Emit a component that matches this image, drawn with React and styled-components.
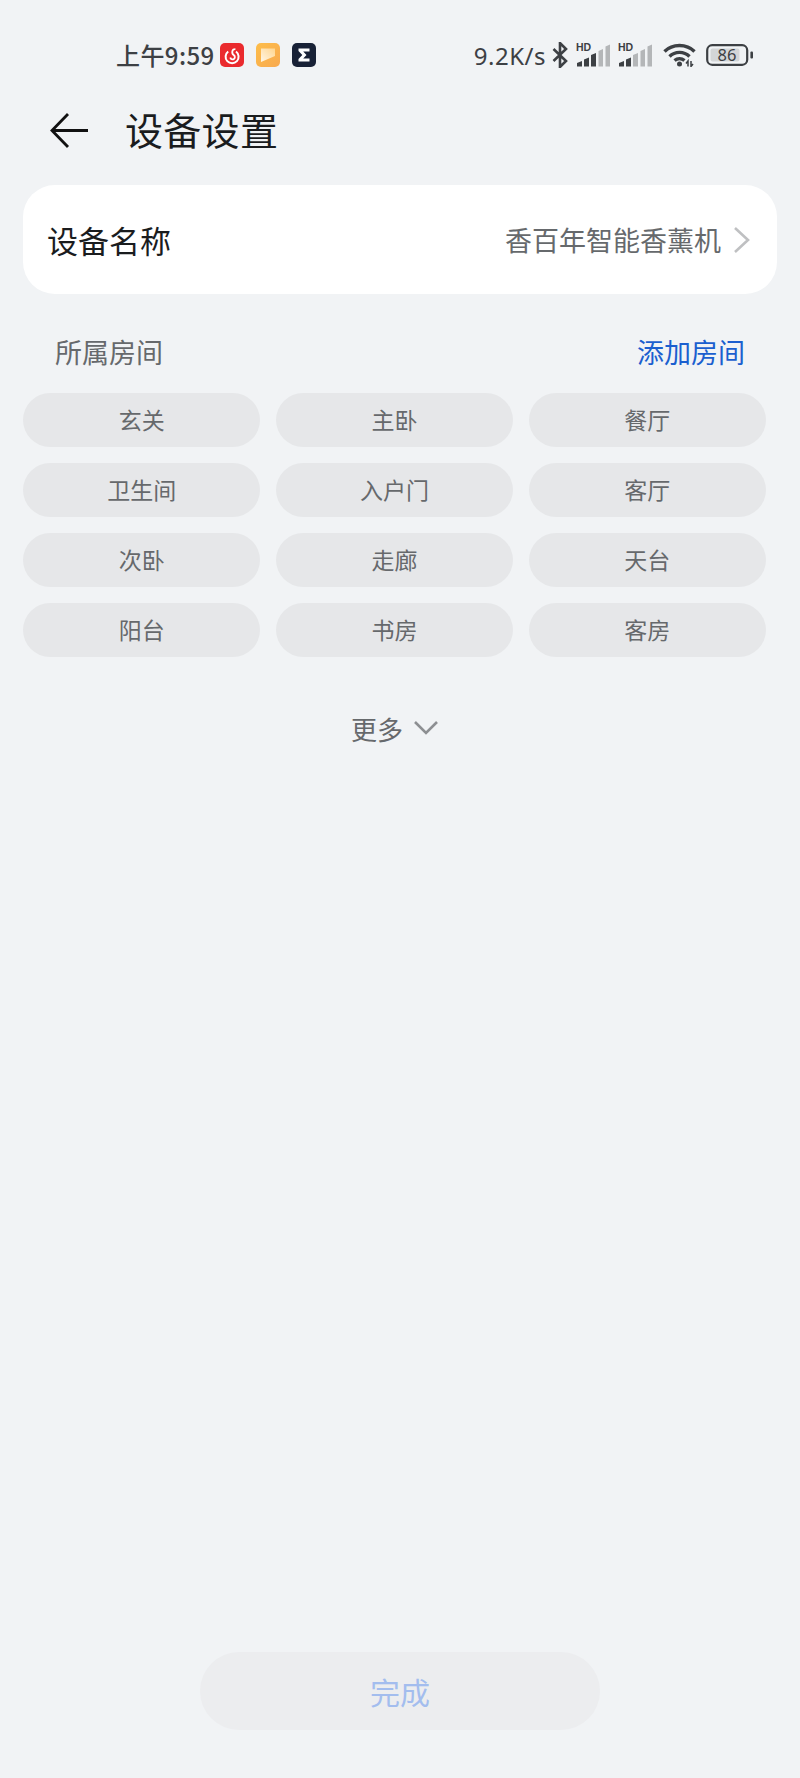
import React from 'react';
import styled, { createGlobalStyle } from 'styled-components';

const GlobalStyle = createGlobalStyle`
  html, body {
    margin: 0;
    padding: 0;
    background: #f1f3f5;
  }
  * {
    box-sizing: border-box;
  }
`;

const Page = styled.div`
  display: flex;
  flex-direction: column;
  width: 800px;
  height: 1778px;
  background: #f1f3f5;
  font-family: 'Noto Sans CJK SC', 'Noto Sans', sans-serif;
  overflow: hidden;
`;

const StatusBar = styled.div`
  display: flex;
  justify-content: space-between;
  align-items: center;
  height: 40px;
  margin-top: 35px;
  padding: 0 47px 0 116px;
  color: #3d4044;
`;

const StatusGroup = styled.div`
  display: flex;
  align-items: center;
`;

const Clock = styled.span`
  font-size: 24px;
  font-weight: 500;
  letter-spacing: 0.4px;
  margin: 0 6px 2px 0;
`;

const AppIcon = styled.svg`
  width: 24px;
  height: 24px;
  margin-right: 12px;
  &:first-of-type {
    margin-left: -1px;
  }
`;

const Speed = styled.span`
  font-family: 'Noto Sans', sans-serif;
  font-size: 24px;
  margin-right: 6px;
  letter-spacing: 0.5px;
`;

const BluetoothIcon = styled.svg`
  width: 16px;
  height: 26px;
  margin-right: 8px;
`;

const SignalSvg = styled.svg`
  width: 35px;
  height: 32px;
  margin: -8px 7px 0 0;
`;

const WifiIcon = styled.svg`
  width: 33px;
  height: 24px;
  margin: 0 10px 0 3px;
`;

const BatteryIcon = styled.svg`
  width: 47px;
  height: 22px;
`;

const Header = styled.div`
  display: flex;
  align-items: center;
  height: 64px;
  margin-top: 21px;
  padding-left: 49px;
`;

const BackIcon = styled.svg`
  width: 40px;
  height: 37px;
  margin: 5px 36px 0 0;
`;

const Title = styled.h1`
  margin: 0;
  font-size: 38px;
  font-weight: 400;
  color: #1a1c1e;
  letter-spacing: 0.3px;
`;

const NameCard = styled.div`
  display: flex;
  justify-content: space-between;
  align-items: center;
  width: 754px;
  height: 109px;
  margin: 25px 0 0 23px;
  padding: 0 27px 0 24px;
  background: #fff;
  border-radius: 32px;
`;

const NameLabel = styled.span`
  font-size: 31px;
  color: #1a1c1e;
`;

const NameValue = styled.div`
  display: flex;
  align-items: center;
  gap: 12px;
  font-size: 27px;
  color: #66696c;
`;

const Chevron = styled.svg`
  width: 17px;
  height: 28px;
`;

const SectionHead = styled.div`
  display: flex;
  justify-content: space-between;
  align-items: center;
  height: 40px;
  margin-top: 37px;
  padding: 0 55px 0 55px;
  font-size: 27px;
`;

const SectionTitle = styled.span`
  color: #66696c;
`;

const AddLink = styled.a`
  color: #1b5fcf;
`;

const RoomGrid = styled.div`
  display: grid;
  grid-template-columns: repeat(3, 1fr);
  grid-auto-rows: 54px;
  column-gap: 15.5px;
  row-gap: 16px;
  width: 743px;
  margin: 22px 0 0 23px;
`;

const RoomChip = styled.div`
  display: flex;
  justify-content: center;
  align-items: center;
  padding-bottom: 2px;
  background: #e6e7e9;
  border-radius: 27px;
  font-size: 23px;
  color: #66696c;
`;

const MoreRow = styled.div`
  display: flex;
  justify-content: center;
  align-items: center;
  gap: 10px;
  height: 40px;
  margin-top: 51px;
  padding-right: 10px;
  font-size: 26px;
  color: #66696c;
`;

const MoreIcon = styled.svg`
  width: 26px;
  height: 16px;
`;

const Footer = styled.div`
  display: flex;
  justify-content: center;
  margin-top: auto;
  padding-bottom: 48px;
`;

const DoneButton = styled.button`
  width: 400px;
  height: 78px;
  border: 0;
  border-radius: 39px;
  background: #ecedef;
  color: #a3bdee;
  font-family: inherit;
  font-size: 30px;
  font-weight: 400;
`;

const rooms = ['玄关', '主卧', '餐厅', '卫生间', '入户门', '客厅', '次卧', '走廊', '天台', '阳台', '书房', '客房'];

// five bars with slanted tops, the first ones dark
const bars = [
  { x: 1, w: 5, top: 18 },
  { x: 8, w: 5, top: 14.5 },
  { x: 15, w: 5, top: 10 },
  { x: 22.5, w: 4.5, top: 6 },
  { x: 29.5, w: 4.5, top: 1.5 },
];

const SignalIcon = ({ filled }) => (
  <SignalSvg viewBox="0 -8 35 32">
    <text x="0" y="7.500" fontSize="10.500" fontWeight="700" fontFamily="'Liberation Sans', sans-serif" fill="#3d4044">HD</text>
    {bars.map((b, i) => (
      <path
        key={b.x}
        d={`M${b.x} 23.500V${b.top + 2}L${b.x + b.w} ${b.top}V23.500z`}
        fill={i < filled ? '#3d4044' : '#b4b6b8'}
      />
    ))}
  </SignalSvg>
);

const App = () => {
  return (
    <Page>
      <GlobalStyle />
      <StatusBar>
        <StatusGroup>
          <Clock>上午9:59</Clock>
          <AppIcon viewBox="0 0 24 24">
            <rect width="24" height="24" rx="5" fill="#ea2a2e" />
            <path d="M8.200 8.500a6.500 6.500 0 1 0 7.800 0" fill="none" stroke="#fff" strokeWidth="2" />
            <path d="M10.300 14.500a2.300 2.300 0 1 0 3.400-2.400c-1.200-.9-1.700-2.500-1.300-4.200.3-1.100 1.400-1.800 3-1.800" fill="none" stroke="#fff" strokeWidth="1.800" />
          </AppIcon>
          <AppIcon viewBox="0 0 24 24">
            <defs>
              <linearGradient id="noteBg" x1="0" y1="0" x2="1" y2="1">
                <stop offset="0" stopColor="#fdbd4a" />
                <stop offset="1" stopColor="#f8a94f" />
              </linearGradient>
              <linearGradient id="noteFg" x1="0" y1="1" x2="1" y2="0">
                <stop offset="0" stopColor="#fff6e6" />
                <stop offset="1" stopColor="#ffd58e" />
              </linearGradient>
            </defs>
            <rect width="24" height="24" rx="5" fill="url(#noteBg)" />
            <path d="M5 5.500h14v7.500L5 19z" fill="url(#noteFg)" />
          </AppIcon>
          <AppIcon viewBox="0 0 24 24">
            <rect width="24" height="24" rx="5" fill="#182136" />
            <path d="M6.500 5.500h11v3h-6.300l3.300 3.500-3.300 3.500h6.300v3h-11v-2.600l3.800-3.900-3.800-3.900z" fill="#fff" />
          </AppIcon>
        </StatusGroup>
        <StatusGroup>
          <Speed>9.2K/s</Speed>
          <BluetoothIcon viewBox="0 0 16 26">
            <path d="M1.500 7l12.500 12-6 6V1l6 6L1.500 19" fill="none" stroke="#3d4044" strokeWidth="2.600" />
          </BluetoothIcon>
          <SignalIcon filled={3} />
          <SignalIcon filled={2} />
          <WifiIcon viewBox="0 0 33 24">
            <path d="M1.500 8.500c8-8 22-8 30 0M6.500 13.500c5.500-5.500 14.500-5.500 20 0M11.500 17.500c3-2.500 7-2.500 10 0" fill="none" stroke="#3d4044" strokeWidth="3.400" />
            <circle cx="16.500" cy="21" r="2.500" fill="#3d4044" />
            <path d="M25 23.500v-5.500l-2 2.500M28 18v5.500l2-2.500" fill="none" stroke="#3d4044" strokeWidth="1.500" />
          </WifiIcon>
          <BatteryIcon viewBox="0 0 47 22">
            <rect x="1.200" y="1.200" width="40" height="19.600" rx="5" fill="none" stroke="#3d4044" strokeWidth="2.200" />
            <rect x="4.500" y="4.500" width="29" height="13" rx="2" fill="#d3d5d7" />
            <rect x="44.400" y="7.500" width="2.600" height="7" rx="1" fill="#3d4044" />
            <text x="21" y="16.800" textAnchor="middle" fontSize="16.500" fontFamily="'Noto Sans', sans-serif" fill="#3d4044">86</text>
          </BatteryIcon>
        </StatusGroup>
      </StatusBar>

      <Header>
        <BackIcon viewBox="0 0 40 37">
          <path d="M19 2L3 18.500 19 35M3 18.500h36" fill="none" stroke="#111" strokeWidth="2.800" />
        </BackIcon>
        <Title>设备设置</Title>
      </Header>

      <NameCard>
        <NameLabel>设备名称</NameLabel>
        <NameValue>
          香百年智能香薰机
          <Chevron viewBox="0 0 17 28">
            <path d="M2 2l13 12L2 26" fill="none" stroke="#bfc0c2" strokeWidth="2.600" />
          </Chevron>
        </NameValue>
      </NameCard>

      <SectionHead>
        <SectionTitle>所属房间</SectionTitle>
        <AddLink>添加房间</AddLink>
      </SectionHead>

      <RoomGrid>
        {rooms.map((room) => (
          <RoomChip key={room}>{room}</RoomChip>
        ))}
      </RoomGrid>

      <MoreRow>
        更多
        <MoreIcon viewBox="0 0 26 16">
          <path d="M2 2l11 11L24 2" fill="none" stroke="#8d8f92" strokeWidth="2.600" />
        </MoreIcon>
      </MoreRow>

      <Footer>
        <DoneButton>完成</DoneButton>
      </Footer>
    </Page>
  );
};

export default App;
